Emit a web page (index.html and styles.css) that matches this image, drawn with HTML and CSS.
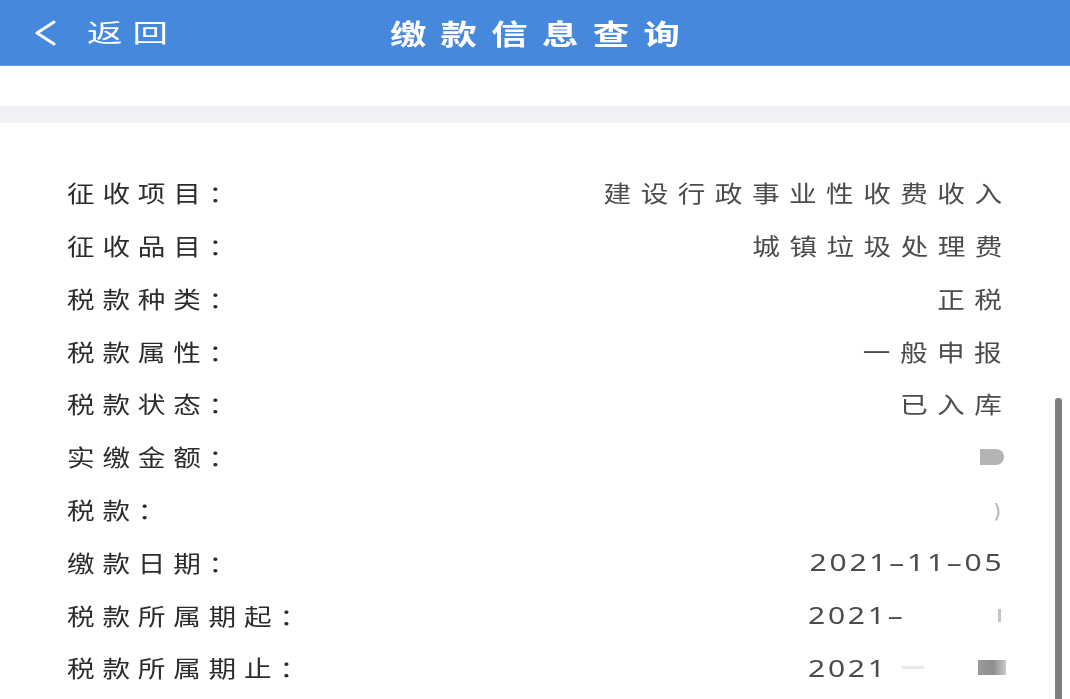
FILE: index.html
```html
<!DOCTYPE html>
<html lang="zh-CN">
<head>
<meta charset="utf-8">
<title>缴款信息查询</title>
<link rel="stylesheet" href="styles.css">
</head>
<body>
<div class="app">
  <header class="topbar">
    <div class="back">
      <svg class="chev" width="26" height="26" viewBox="0 0 26 26" aria-hidden="true">
        <polyline points="21,2 4,13 21,24" fill="none" stroke="#ffffff" stroke-width="3" stroke-linecap="round" stroke-linejoin="round"/>
      </svg>
      <span class="back-text">返回</span>
    </div>
    <h1 class="title"><span class="title-text">缴款信息查询</span></h1>
    <div class="spacer"></div>
  </header>
  <div class="gap-white"></div>
  <div class="gap-gray"></div>
  <main class="list">
    <div class="row"><span class="label">征收项目：</span><span class="value">建设行政事业性收费收入</span></div>
    <div class="row"><span class="label">征收品目：</span><span class="value">城镇垃圾处理费</span></div>
    <div class="row"><span class="label">税款种类：</span><span class="value">正税</span></div>
    <div class="row"><span class="label">税款属性：</span><span class="value">一般申报</span></div>
    <div class="row"><span class="label">税款状态：</span><span class="value">已入库</span></div>
    <div class="row"><span class="label">实缴金额：</span><span class="blob"></span></div>
    <div class="row"><span class="label">税款：</span><span class="paren">)</span></div>
    <div class="row"><span class="label">缴款日期：</span><span class="value date">2021–11–05</span></div>
    <div class="row"><span class="label">税款所属期起：</span>
      <div class="masked"><span class="date-l">2021–</span><span class="tick"></span></div>
    </div>
    <div class="row"><span class="label">税款所属期止：</span>
      <div class="masked"><span class="date-l">2021</span><span class="smear"></span><span class="blob2"></span></div>
    </div>
  </main>
  <div class="scrollbar"></div>
</div>
</body>
</html>
```

FILE: styles.css
```css
* { box-sizing: border-box; }
html, body { margin: 0; padding: 0; }
body {
  width: 1070px;
  height: 699px;
  overflow: hidden;
  background: #ffffff;
  font-family: "Noto Sans CJK SC", "Noto Sans", sans-serif;
}
.app { position: relative; width: 1070px; height: 699px; }

.topbar {
  height: 66px;
  background: #4689dc;
  display: grid;
  grid-template-columns: 1fr auto 1fr;
  align-items: center;
  border-bottom: 1px solid #6ea3e6;
}
.back {
  display: flex;
  align-items: center;
  padding-left: 33px;
  color: #fff;
}
.chev { display: block; margin-top: 1px; }
.back-text {
  display: inline-block;
  margin-left: 28px;
  font-size: 25px;
  letter-spacing: 7px;
  transform: scaleX(1.42);
  transform-origin: left center;
  line-height: 1;
  margin-top: -2px;
}
.title {
  margin: 0;
  font-size: 28px;
  font-weight: 700;
  color: #ffffff;
  line-height: 1;
  margin-left: 4px;
}
.title-text {
  display: inline-block;
  letter-spacing: 11px;
  margin-right: -11px;
  transform: scaleX(1.3);
  transform-origin: center;
}

.gap-white { height: 40px; background: #ffffff; }
.gap-gray { height: 17px; background: #f1f0f4; }

.list { padding-top: 43.4px; }
.row {
  height: 52.8px;
  display: flex;
  align-items: center;
  justify-content: space-between;
  padding-left: 67px;
  padding-right: 68px;
}
.label {
  display: inline-block;
  font-size: 23px;
  font-weight: 400;
  color: #2c2c2c;
  letter-spacing: 6.5px;
  transform: scaleX(1.2);
  transform-origin: left center;
  line-height: 1;
}
.value {
  --ls: 7.9px;
  display: inline-block;
  font-size: 23px;
  font-weight: 400;
  color: #4c4c4c;
  letter-spacing: var(--ls);
  margin-right: calc(0px - var(--ls));
  transform: scaleX(1.2);
  transform-origin: calc(100% - var(--ls)) center;
  line-height: 1;
}
.value.date, .date-l {
  --ls: 2.2px;
  font-family: "Noto Sans", sans-serif;
  font-size: 24px;
  font-weight: 400;
  color: #4c4c4c;
  letter-spacing: 2.2px;
  transform: scaleX(1.25);
}
.value.date { transform-origin: calc(100% - 2.2px) center; }
.date-l {
  display: inline-block;
  transform-origin: left center;
  line-height: 1;
}

.blob {
  width: 24px;
  height: 16px;
  background: #b4b4b4;
  border-radius: 0 9px 9px 0;
  margin-right: -2px;
  filter: blur(0.6px);
}
.paren {
  font-family: "Noto Sans", sans-serif;
  font-size: 20px;
  color: #b0b0b0;
  margin-right: 2px;
}
.masked {
  width: 194px;
  display: flex;
  align-items: center;
  justify-content: space-between;
}
.tick {
  width: 3px;
  height: 13px;
  background: #c4c4c4;
  margin-right: 1px;
}
.smear {
  width: 22px;
  height: 3px;
  background: #e9e9e9;
  margin-left: 30px;
  margin-right: auto;
}
.blob2 {
  width: 28px;
  height: 15px;
  background: linear-gradient(90deg, #9a9a9a 0%, #8f8f8f 55%, #c9c9c9 100%);
  filter: blur(0.5px);
  margin-right: -4px;
}

.scrollbar {
  position: absolute;
  left: 1055px;
  top: 398px;
  width: 7px;
  bottom: 0;
  background: #7e7d80;
  border-radius: 3px 3px 0 0;
}
```
